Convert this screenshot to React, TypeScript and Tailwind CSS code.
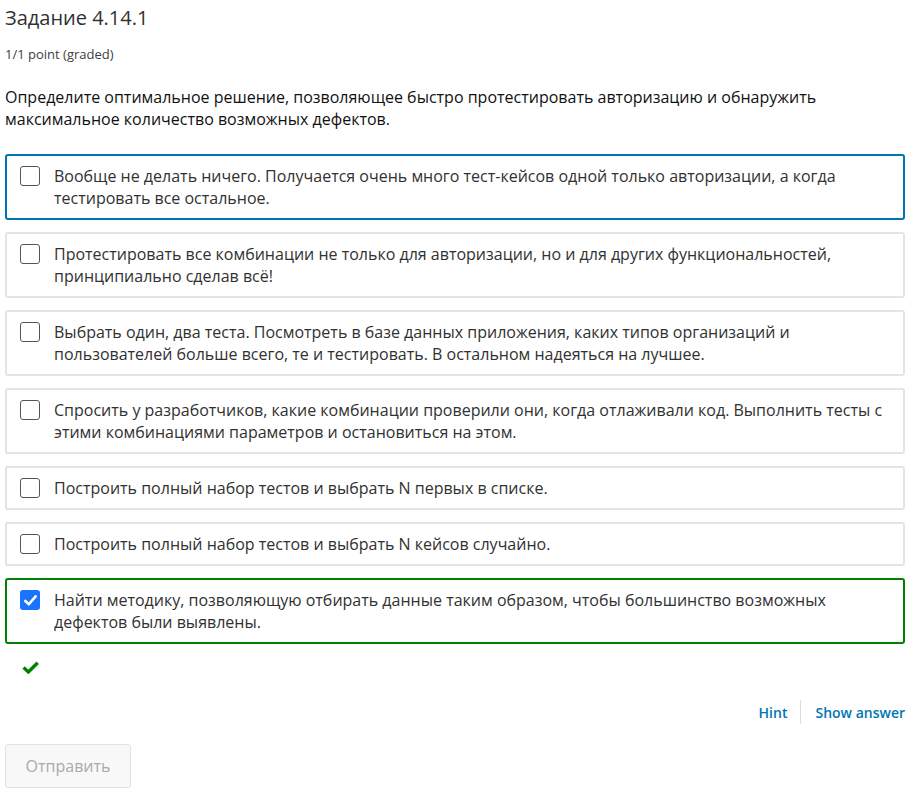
import React from "react";

type Choice = {
  text: string;
  checked?: boolean;
  state?: "focus" | "correct";
};

const choices: Choice[] = [
  {
    text: "Вообще не делать ничего. Получается очень много тест-кейсов одной только авторизации, а когда тестировать все остальное.",
    state: "focus",
  },
  {
    text: "Протестировать все комбинации не только для авторизации, но и для других функциональностей, принципиально сделав всё!",
  },
  {
    text: "Выбрать один, два теста. Посмотреть в базе данных приложения, каких типов организаций и пользователей больше всего, те и тестировать. В остальном надеяться на лучшее.",
  },
  {
    text: "Спросить у разработчиков, какие комбинации проверили они, когда отлаживали код. Выполнить тесты с этими комбинациями параметров и остановиться на этом.",
  },
  { text: "Построить полный набор тестов и выбрать N первых в списке." },
  { text: "Построить полный набор тестов и выбрать N кейсов случайно." },
  {
    text: "Найти методику, позволяющую отбирать данные таким образом, чтобы большинство возможных дефектов были выявлены.",
    checked: true,
    state: "correct",
  },
];

const borderTone: Record<string, string> = {
  focus: "border-[#0075b4]",
  correct: "border-[#008100]",
};

function Box({ checked }: { checked?: boolean }) {
  if (checked) {
    return (
      <span className="mt-px flex h-5 w-5 shrink-0 items-center justify-center rounded-[3px] bg-[#1a73ff]">
        <svg viewBox="0 0 16 16" className="h-[15px] w-[15px]" aria-hidden="true">
          <path d="M2.5 8.5 L6.2 12 L13.5 3.5" fill="none" stroke="white" strokeWidth="2.8" strokeLinecap="round" strokeLinejoin="round" />
        </svg>
      </span>
    );
  }
  return <span className="mt-px h-5 w-5 shrink-0 rounded-[3px] border-[1.5px] border-[#555] bg-white" />;
}

export default function App() {
  return (
    <div className="min-h-screen bg-white pl-[5px] pr-[16px] font-['Open_Sans',sans-serif] text-[#313131]">
      <h2 className="pt-[3px] text-[20px] leading-[30px] font-normal text-[#313131]">Задание 4.14.1</h2>
      <div className="mt-[11px] text-[13px] leading-[20px] text-[#414141]">1/1 point (graded)</div>

      <p className="mt-[22px] text-[16px] leading-[22px] text-[#111]">
        Определите оптимальное решение, позволяющее быстро протестировать авторизацию и обнаружить максимальное количество возможных дефектов.
      </p>

      <div className="mt-[24px] flex flex-col gap-[12px]">
        {choices.map((c, i) => (
          <label
            key={i}
            className={`flex items-start gap-[14px] rounded-[3px] border-2 py-[9px] pr-2 pl-[13px] text-[16px] leading-[22px] text-[#313131] ${
              c.state ? borderTone[c.state] : "border-[#e4e4e4]"
            }`}
          >
            <Box checked={c.checked} />
            <span>{c.text}</span>
          </label>
        ))}
      </div>

      <div className="mt-[17px] pl-[17px]">
        <svg viewBox="0 0 16 12" className="h-[13px] w-[17px]" aria-hidden="true">
          <path d="M1.5 6 L6 10.2 L14.8 1.5" fill="none" stroke="#008100" strokeWidth="3.2" strokeLinejoin="miter" />
        </svg>
      </div>

      <div className="mt-[26px] flex items-center justify-end text-[14px] font-semibold text-[#0075b4]">
        <span className="pr-[13px]">Hint</span>
        <span className="h-[24px] w-px bg-[#ddd]" />
        <span className="pl-[14px]">Show answer</span>
      </div>

      <button
        disabled
        className="mt-[20px] h-[44px] w-[126px] rounded-[3px] border border-[#e3e3e3] bg-[#f8f8f8] text-[16px] text-[#aaa]"
      >
        Отправить
      </button>
    </div>
  );
}
